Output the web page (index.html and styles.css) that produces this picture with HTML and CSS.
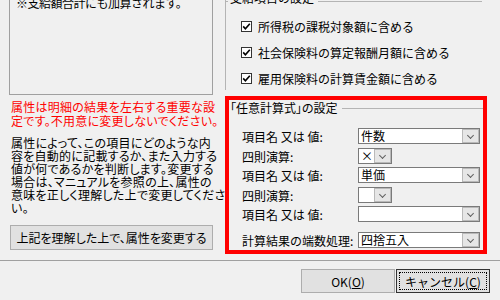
FILE: index.html
```html
<!DOCTYPE html>
<html lang="ja">
<head>
  <meta charset="UTF-8">
  <title>属性の設定</title>
  <link rel="stylesheet" href="styles.css">
</head>
<body>
  <div class="dialog">
    <div class="main">
      <div class="left">
        <div class="note">※支給額合計にも加算されます。</div>
        <p class="warning">属性は明細の結果を左右する重要な設<br>定です。不用意に変更しないでください。</p>
        <p class="desc">属性によって、この項目にどのような内<br>容を自動的に記載するか、また入力する<br>値が何であるかを判断します。変更する<br>場合は、マニュアルを参照の上、属性の<br>意味を正しく理解した上で変更してくださ<br>い。</p>
        <button class="btn attr-btn">上記を理解した上で、属性を変更する</button>
      </div>

      <div class="right">
        <div class="group settings">
          <div class="group-title"><span>支給項目の設定</span></div>
          <label class="check"><span class="box"><svg width="9" height="9" viewBox="0 0 9 9"><polyline points="1.2,4.4 3.4,6.8 7.8,1.8" fill="none" stroke="#000" stroke-width="1.6"/></svg></span>所得税の課税対象額に含める</label>
          <label class="check"><span class="box"><svg width="9" height="9" viewBox="0 0 9 9"><polyline points="1.2,4.4 3.4,6.8 7.8,1.8" fill="none" stroke="#000" stroke-width="1.6"/></svg></span>社会保険料の算定報酬月額に含める</label>
          <label class="check"><span class="box"><svg width="9" height="9" viewBox="0 0 9 9"><polyline points="1.2,4.4 3.4,6.8 7.8,1.8" fill="none" stroke="#000" stroke-width="1.6"/></svg></span>雇用保険料の計算賃金額に含める</label>
        </div>

        <div class="formula">
          <div class="group-title inner"><span>「任意計算式」の設定</span></div>
          <div class="row first">
            <span class="label">項目名 又は 値:</span>
            <div class="combo"><span class="value">件数</span><span class="drop"></span></div>
          </div>
          <div class="row op">
            <span class="label">四則演算:</span>
            <div class="combo small"><span class="value">×</span><span class="drop"></span></div>
          </div>
          <div class="row">
            <span class="label">項目名 又は 値:</span>
            <div class="combo"><span class="value">単価</span><span class="drop"></span></div>
          </div>
          <div class="row op">
            <span class="label">四則演算:</span>
            <div class="combo small"><span class="value"></span><span class="drop"></span></div>
          </div>
          <div class="row">
            <span class="label">項目名 又は 値:</span>
            <div class="combo"><span class="value"></span><span class="drop"></span></div>
          </div>
          <div class="row last">
            <span class="label">計算結果の端数処理:</span>
            <div class="combo"><span class="value">四捨五入</span><span class="drop"></span></div>
          </div>
        </div>
      </div>
    </div>

    <div class="footer">
      <button class="btn">OK(<u>O</u>)</button>
      <button class="btn focused">キャンセル(<u>C</u>)</button>
    </div>
  </div>
</body>
</html>
```

FILE: styles.css
```css
body {
  margin: 0;
  background-color: #f0f0f0;
  font-family: "Noto Sans CJK JP", "Noto Sans", sans-serif;
  font-size: 12px;
  color: #000;
  overflow: hidden;
}

.dialog {
  width: 500px;
  height: 300px;
  overflow: hidden;
}

.main {
  display: flex;
  height: 260px;
  padding-left: 9px;
}

/* left column */
.left {
  width: 204px;
}

.note {
  margin-top: -8px;
  height: 103px;
  box-sizing: border-box;
  border: 1px solid #a0a0a0;
  padding: 3px 6px 0;
  line-height: 14px;
  letter-spacing: -0.5px;
}

.warning {
  margin: 5px 0 0 2px;
  color: #ff0000;
  line-height: 14px;
  white-space: nowrap;
  font-feature-settings: "palt";
  letter-spacing: 0.25px;
}

.desc {
  margin: 8px 0 0 2px;
  line-height: 13px;
  white-space: nowrap;
  font-feature-settings: "palt";
  letter-spacing: 0.25px;
}

.btn {
  font-family: inherit;
  font-size: 12px;
  color: #000;
  background-color: #e1e1e1;
  border: 1px solid #adadad;
  padding: 0;
  height: 24px;
  white-space: nowrap;
}

.attr-btn {
  display: block;
  margin: 11px 0 0 1px;
  width: 203px;
  height: 25px;
  font-feature-settings: "palt";
}

/* right column */
.right {
  margin-left: 12px;
  width: 262px;
}

.group-title {
  display: flex;
  align-items: center;
  height: 14px;
  line-height: 14px;
}

.group-title::before {
  content: "";
  width: 3px;
  border-top: 1px solid #b4b4b4;
}

.group-title::after {
  content: "";
  flex: 1;
  border-top: 1px solid #b4b4b4;
  margin-left: 4px;
}

.group-title span {
  padding-left: 2px;
}

.settings {
  height: 96px;
  width: 257px;
  box-sizing: border-box;
  border-left: 1px solid #b4b4b4;
  margin-top: -6px;
}

.settings .group-title {
  margin-left: -1px;
}

.settings .group-title span {
  margin-top: -7px;
}

.check {
  display: flex;
  align-items: center;
  height: 26px;
  padding-left: 15px;
  gap: 6px;
}

.check:first-of-type {
  margin-top: 5px;
}

.box {
  display: flex;
  align-items: center;
  justify-content: center;
  width: 11px;
  height: 11px;
  box-sizing: border-box;
  border: 1px solid #333;
  background-color: #fff;
}

.formula {
  margin-top: 6px;
  width: 262px;
  height: 158px;
  box-sizing: border-box;
  border: 4px solid #ff0000;
}

.group-title.inner {
  margin-top: 1px;
  font-feature-settings: "palt";
}

.group-title.inner::before {
  width: 0;
}

.group-title.inner span {
  padding-left: 1px;
}

.row {
  display: flex;
  align-items: center;
  height: 16px;
  margin-top: 3px;
  padding-left: 13px;
}

.row.first {
  margin-top: 13px;
}

.row.op {
  margin-top: 4px;
}

.row.last {
  margin-top: 10px;
}

.label {
  width: 116px;
  white-space: nowrap;
}

.combo {
  display: flex;
  width: 122px;
  height: 16px;
  box-sizing: border-box;
  border: 1px solid #7a7a7a;
  background-color: #fff;
}

.combo.small {
  width: 34px;
}

.value {
  flex: 1;
  line-height: 14px;
  padding-left: 2px;
  white-space: nowrap;
}

.drop {
  position: relative;
  width: 17px;
  height: 14px;
  box-sizing: border-box;
  border: 1px solid #b9b9b9;
  background-color: #e6e6e6;
}

.drop::after {
  content: "";
  position: absolute;
  left: 5px;
  top: 3px;
  width: 4px;
  height: 4px;
  border-right: 1px solid #606060;
  border-bottom: 1px solid #606060;
  transform: rotate(45deg);
}

/* bottom buttons */
.footer {
  display: flex;
  justify-content: flex-end;
  gap: 1px;
  border-top: 1px solid #a0a0a0;
  padding: 8px 10px 0 0;
}

.footer .btn {
  width: 94px;
}

.focused {
  border-color: #333;
  outline: 1px dotted #000;
  outline-offset: -4px;
}
```
